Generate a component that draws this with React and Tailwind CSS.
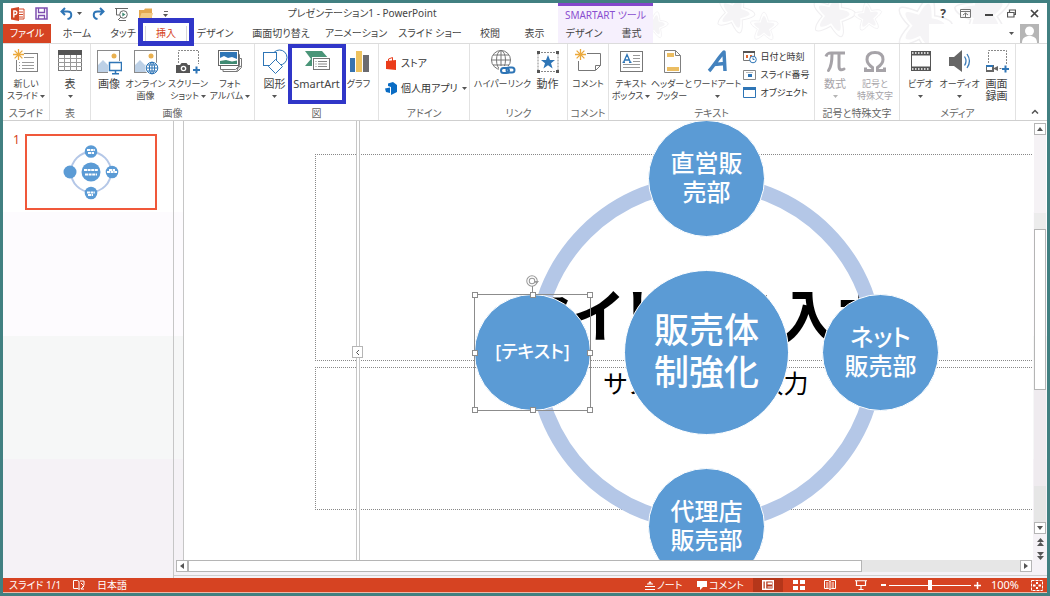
const Svg = ({ w = 26, h = 26, children, className = "" }) => (
  <svg width={w} height={h} viewBox={`0 0 ${w} ${h}`} fill="none" className={`shrink-0 ${className}`} aria-hidden="true">
    {children}
  </svg>
);

const Caret = ({ className = "text-[#555]" }) => (
  <svg width="5" height="3" viewBox="0 0 5 3" className={`shrink-0 ${className}`} aria-hidden="true">
    <path d="M0 0h5L2.5 3z" fill="currentColor" />
  </svg>
);

const Burst = () => (
  <path d="M5.5 0v11M0 5.5h11M1.6 1.6l7.8 7.8M9.4 1.6L1.6 9.4" stroke="#eba93c" strokeWidth="1.3" />
);

const Photo = () => (
  <>
    <rect x="1.5" y="1.500" width="22" height="22" fill="#fff" stroke="#8a8a8a" />
    <path d="M2 23v-7l5-5 5 5 3-2 3 3v6z" fill="#bcd0e6" />
    <circle cx="18" cy="7" r="2.500" fill="#e9b04f" />
  </>
);

const icons = {
  newSlide: (
    <Svg>
      <rect x="3.500" y="4.500" width="21" height="18" fill="#fff" stroke="#808080" />
      <path d="M11 8.500h10M9 13.500h12M9 16.500h12M9 19.500h12M6 13.500h1M6 16.500h1M6 19.500h1" stroke="#9a9a9a" />
      <rect x="0" y="0" width="11" height="11" fill="#fff" />
      <Burst />
    </Svg>
  ),
  table: (
    <Svg>
      <rect x="1.500" y="1.500" width="23" height="20" fill="#fff" stroke="#777" />
      <rect x="1" y="1" width="24" height="5" fill="#555" />
      <path d="M1 9.500h24M1 13.500h24M1 17.500h24M7.500 6v16M13.500 6v16M19.500 6v16" stroke="#999" />
    </Svg>
  ),
  picture: (
    <Svg>
      <Photo />
      <rect x="12" y="12" width="14" height="14" fill="#fff" />
      <rect x="13.500" y="13.500" width="12" height="8" fill="#fff" stroke="#2e75b6" strokeWidth="1.500" />
      <path d="M19.500 22v3M16 24.800h7" stroke="#2e75b6" strokeWidth="1.500" />
    </Svg>
  ),
  online: (
    <Svg>
      <Photo />
      <circle cx="19" cy="19" r="7" fill="#fff" />
      <g stroke="#2e75b6">
        <circle cx="19" cy="19" r="5.800" fill="#fff" />
        <ellipse cx="19" cy="19" rx="2.600" ry="5.800" />
        <path d="M13.200 19h11.600M14.200 16h9.600M14.200 22h9.600M19 13v12" />
      </g>
    </Svg>
  ),
  screenshot: (
    <Svg>
      <path d="M3.500 14V1.500h20V15" stroke="#888" strokeDasharray="2 1" />
      <path d="M1 16h4l1.500-2h5l1.500 2h2v8H1z" fill="#555" />
      <circle cx="8.500" cy="19.500" r="2.800" fill="#fff" />
      <circle cx="8.500" cy="19.500" r="1.500" fill="#555" />
      <path d="M21.500 17.500v7M18 21h7" stroke="#2e75b6" strokeWidth="2" />
    </Svg>
  ),
  album: (
    <Svg>
      <path d="M6 9.500h18.500v9l-4 4H6z" fill="#fff" stroke="#777" />
      <path d="M3.500 5.500h19v11l-4 4h-15z" fill="#fff" stroke="#777" />
      <rect x="1.500" y="1.500" width="20" height="15" fill="#fff" stroke="#666" />
      <rect x="3" y="3" width="17" height="7" fill="#2e75b6" />
      <path d="M3 9l4-2 4 2 4-1 5 2v2H3z" fill="#fff" />
      <path d="M3 12l6-1 6 1.500 5-1V15H3z" fill="#3f8a72" />
      <path d="M20 22l1-4 4-1" fill="#ddd" stroke="#777" />
    </Svg>
  ),
  shapes: (
    <Svg w={26}>
      <circle cx="17.500" cy="8.500" r="7.500" fill="#fff" stroke="#2e75b6" />
      <rect x="1.500" y="3.500" width="13" height="13" fill="#fff" stroke="#2e75b6" />
      <path d="M13.500 10.500l7 7-7 7-7-7z" fill="#fff" stroke="#2e75b6" />
    </Svg>
  ),
  smartart: (
    <Svg>
      <path d="M1 2h17l7 8-7 7H1l6-7z" fill="#4a9578" />
      <rect x="8" y="8" width="18" height="15" fill="#fff" />
      <rect x="9.500" y="9.500" width="16" height="11" fill="#fff" stroke="#777" />
      <path d="M14 12.500h9M14 15h9M14 17.500h9M11.500 12.500h1M11.500 15h1M11.500 17.500h1" stroke="#888" />
    </Svg>
  ),
  chart: (
    <Svg w={20}>
      <path d="M1 9h5v14H1z" fill="#3673b0" />
      <path d="M7 2h6v21H7z" fill="#edc25f" />
      <path d="M14 6h6v17h-6z" fill="#6b6b70" />
    </Svg>
  ),
  link: (
    <Svg>
      <g stroke="#777">
        <circle cx="11" cy="11" r="9.500" fill="#fff" />
        <ellipse cx="11" cy="11" rx="4.500" ry="9.500" />
        <path d="M1.500 11h19M3 6h16M3 16h16M11 1.500v19" />
      </g>
      <rect x="9" y="17" width="17" height="9" fill="#fff" />
      <g stroke="#2e75b6" strokeWidth="2">
        <rect x="11" y="19" width="8" height="5" rx="2.500" />
        <rect x="16.500" y="18.500" width="8" height="5" rx="2.500" />
      </g>
    </Svg>
  ),
  action: (
    <Svg>
      <rect x="3" y="3.500" width="20" height="19" stroke="#888" strokeDasharray="2 1" />
      <path d="M2 2h3v3H2zM21 2h3v3h-3zM2 21h3v3H2zM21 21h3v3h-3z" fill="#555" />
      <path d="M13 6l2 5h5l-4 3.300 1.600 5.200L13 16.300l-4.600 3.200L10 14.300 6 11h5z" fill="#2e75b6" />
    </Svg>
  ),
  comment: (
    <Svg>
      <path d="M12 4.500h13.500v12l-5 5H3.500V12" stroke="#777" />
      <path d="M20.500 21v-4.500h5" stroke="#777" />
      <Burst />
    </Svg>
  ),
  textbox: (
    <Svg>
      <rect x="2.500" y="2.500" width="22" height="20" fill="#fff" stroke="#777" />
      <path d="M15 6.500h7M15 9.500h7M15 12.500h7M5 15.500h17M5 18.500h17" stroke="#999" />
      <path d="M5.500 13.500L9 5.500l3.500 8M6.700 11h4.600M4.500 13.300h2.500M11 13.300h2.500" stroke="#2e75b6" strokeWidth="1.300" />
    </Svg>
  ),
  header: (
    <Svg>
      <path d="M5.500 1.500h11l5 5v17h-16z" fill="#fff" stroke="#808080" />
      <path d="M16.500 1.500v5h5" stroke="#808080" />
      <path d="M8 4h7v4H8zM8 18h12v4H8z" fill="#ebbd62" />
    </Svg>
  ),
  wordart: (
    <Svg>
      <path d="M4 22c4-4 10-14 15-19l1 19M9 15.500l11-1" stroke="#4382be" strokeWidth="3.500" strokeLinejoin="round" />
    </Svg>
  ),
  pi: (
    <Svg>
      <path d="M4 7.500c1-3 2-3.500 5-3.500h14" stroke="#a6a3a8" strokeWidth="3" />
      <path d="M10 5c0 8-1 13-3.500 16.500M17 5v12c0 4 2 4.500 5 3" stroke="#a6a3a8" strokeWidth="3" strokeLinecap="round" />
    </Svg>
  ),
  omega: (
    <Svg>
      <path d="M3.500 18.500v3h7v-3C7.500 16.500 5 13.500 5 10.500 5 5.500 8.500 3.500 13 3.500s8 2 8 7c0 3-2.500 6-5.500 8v3h7v-3" stroke="#a6a3a8" strokeWidth="3" />
    </Svg>
  ),
  video: (
    <Svg>
      <rect x="3" y="2" width="20" height="20" fill="#555" />
      <rect x="4" y="6.500" width="18" height="11" fill="#fff" />
      <path d="M4 4h18M4 20h18" stroke="#fff" strokeWidth="1.500" strokeDasharray="1.500 1.500" />
    </Svg>
  ),
  audio: (
    <Svg>
      <path d="M2 8h5l8-7v22l-8-6H2z" fill="#666" />
      <path d="M17.500 7.500c2 3 2 6 0 9M20 5c3.500 5 3.500 9 0 14" stroke="#3b7bb8" strokeWidth="1.300" />
    </Svg>
  ),
  record: (
    <Svg>
      <path d="M4.500 14V1.500h18V15" stroke="#888" strokeDasharray="2 1" />
      <path d="M2 16h8v7H2z" fill="#666" />
      <path d="M2 16h7v2H2z" fill="#2e75b6" />
      <path d="M3 18h5v3H3z" fill="#fff" />
      <path d="M10 19l4-2v5l-4-2z" fill="#666" />
      <path d="M15.500 19.500h2" stroke="#777" />
      <path d="M21.500 16.500v7M18 20h7" stroke="#2e75b6" strokeWidth="2" />
    </Svg>
  ),
};

function Big({ icon, lines, width, small, arrow, disabled, marked }) {
  return (
    <button
      type="button"
      disabled={disabled}
      className={`relative flex shrink-0 flex-col items-center pt-[5px] ${width} ${disabled ? "text-[#a6a3a8]" : "text-[#444]"}`}
    >
      {icons[icon]}
      {lines.map((l, i) => (
        <span
          key={l}
          className={`flex h-3 items-center gap-0.5 whitespace-nowrap ${i === 0 ? "mt-[3px]" : ""} ${small ? "text-[9px]" : "text-[11px]"}`}
        >
          {l}
          {arrow && i === 1 && <Caret />}
        </span>
      ))}
      {arrow && lines.length === 1 && (
        <span className="flex h-3 items-center">
          <Caret className={disabled ? "text-[#b5b5b5]" : "text-[#555]"} />
        </span>
      )}
      {marked && <span className="pointer-events-none absolute -inset-x-1 top-0 h-[60px] border-4 border-[#3036c8]" />}
    </button>
  );
}

function Row({ icon, children, arrow, big }) {
  return (
    <button type="button" className={`flex items-center gap-1 whitespace-nowrap text-[#333] ${big ? "text-[10px]" : "text-[9px]"}`}>
      {icon}
      {children}
      {arrow && <Caret />}
    </button>
  );
}

function Group({ label, width, children }) {
  return (
    <section aria-label={label} className={`flex shrink-0 flex-col border-r border-[#e2e2e2] ${width}`}>
      <div className="flex h-[63px] justify-center">{children}</div>
      <div className="flex h-3 items-center justify-center text-[10px] whitespace-nowrap text-[#666]">{label}</div>
    </section>
  );
}

const tabs = [
  ["ホーム", "w-[52px]"],
  ["タッチ", "w-10"],
  ["挿入", "w-[46px]"],
  ["デザイン", "w-[52px]"],
  ["画面切り替え", "w-20"],
  ["アニメーション", "w-[70px]"],
  ["スライド ショー", "w-[78px]"],
  ["校閲", "w-[42px]"],
  ["表示", "w-[47px]"],
];

const STAR = "M0-20Q3-20 6-8Q18-9 19-5Q19-2 9 4Q14 15 11 17Q8 18 0 10Q-9 18-12 16Q-14 13-9 3Q-19-3-18-7Q-17-9-6-8Q-3-20 0-20Z";
const stars = [
  [88, 22, 0.5, 10],
  [168, 10, 0.75, 20],
  [197, 24, 0.55, 0],
  [266, 12, 0.85, 12],
  [301, 14, 0.55, -8],
  [356, 22, 1.1, 15],
  [416, 10, 1.1, -10],
];

function Header() {
  return (
    <header className="relative shrink-0 bg-white">
      <svg className="absolute top-0 right-0" width="480" height="40" viewBox="0 0 480 40" aria-hidden="true">
        {stars.map(([x, y, s, r]) => (
          <g key={x} transform={`translate(${x} ${y}) rotate(${r}) scale(${s})`}>
            <path d={STAR} transform="scale(1.35)" fill="#fff" stroke="#f0eff1" />
            <path d={STAR} fill="#f5f4f6" />
          </g>
        ))}
      </svg>
      <div className="relative flex h-[21px]">
        <div className="flex w-[187px] shrink-0 items-center pl-2">
          <Svg w={14} h={14}>
            <path d="M6 2h7v10H6z" fill="#fff" stroke="#d24726" />
            <path d="M8 5h4M8 7.500h4M8 10h4" stroke="#d24726" />
            <path d="M0 1.500L8 0v14l-8-1.500z" fill="#d24726" />
            <path d="M2.800 10.500V4H4c2.500 0 2.500 3.500 0 3.500H3" stroke="#fff" strokeWidth="1.300" />
          </Svg>
          <button type="button" aria-label="上書き保存" className="ml-2.5">
            <Svg w={13} h={13}>
              <path d="M1 1h11v11H1z" stroke="#7e4fb0" strokeWidth="1.500" />
              <path d="M3.500 1v4.500h6V1M3.500 12V8.500h6V12" stroke="#7e4fb0" strokeWidth="1.300" />
            </Svg>
          </button>
          <button type="button" aria-label="元に戻す" className="ml-3 flex items-center gap-1">
            <Svg w={13} h={13}>
              <path d="M5 1L1.500 4.500 5 8M2 4.500h5.500c5 0 5 6.500 0 7.500" stroke="#2e75b6" strokeWidth="2" />
            </Svg>
            <Caret />
          </button>
          <button type="button" aria-label="やり直し" className="ml-2.5">
            <Svg w={13} h={13}>
              <path d="M8 1l3.500 3.500L8 8M11 4.500H5.500c-5 0-5 6.500 0 7.500" stroke="#2e75b6" strokeWidth="2" />
            </Svg>
          </button>
          <button type="button" aria-label="スライドショー" className="ml-2.5">
            <Svg w={14} h={14}>
              <path d="M0 1.500h13M1.500 2v6h4M3 13l3-3" stroke="#666" />
              <circle cx="8.500" cy="7.500" r="3.800" fill="#fff" stroke="#666" />
              <path d="M7.300 5.500l3.200 2-3.200 2z" fill="#3f8a72" />
              <path d="M4 13.500h7" stroke="#666" />
            </Svg>
          </button>
          <button type="button" aria-label="開く" className="ml-2.5">
            <Svg w={14} h={12}>
              <path d="M0 2h5l1-1.500h7V11H0z" fill="#e3a850" />
              <path d="M2.500 5H14l-2 7H0z" fill="#f3cb84" />
            </Svg>
          </button>
          <button type="button" aria-label="カスタマイズ" className="ml-2.5 flex flex-col items-center gap-0.5">
            <span className="h-px w-1 bg-[#666]" />
            <Caret />
          </button>
        </div>
        <h1 className="flex max-w-[368px] flex-1 items-center justify-center pr-6 text-[10px] whitespace-nowrap text-[#444]">
          プレゼンテーション1 - PowerPoint
        </h1>
        <div className="flex w-[95px] shrink-0 items-center justify-center border-t-3 border-[#8347cb] bg-[#f6f0fd] text-[10px] whitespace-nowrap text-[#8a4fd0]">
          SMARTART ツール
        </div>
        <div className="flex flex-1 items-center justify-end gap-3.5 pr-2 text-[#444]">
          <button type="button" aria-label="ヘルプ" className="text-[12px] font-bold">?</button>
          <button type="button" aria-label="リボンの表示オプション">
            <Svg w={11} h={9}><path d="M.5.500h10v8H.5zM.5 2.500h10M3 6l2.500-2L8 6M5.500 4v4" stroke="#777" /></Svg>
          </button>
          <button type="button" aria-label="最小化">
            <Svg w={8} h={9}><path d="M0 6h8" stroke="#444" strokeWidth="2" /></Svg>
          </button>
          <button type="button" aria-label="元のサイズに戻す">
            <Svg w={9} h={9}><path d="M2.500 3V1h6v4.500H7M.5 3.500H7V8H.5z" stroke="#555" strokeWidth="1.200" /></Svg>
          </button>
          <button type="button" aria-label="閉じる">
            <Svg w={9} h={9}><path d="M1 1l7 7M8 1L1 8" stroke="#444" strokeWidth="1.700" /></Svg>
          </button>
        </div>
      </div>
      <nav className="relative flex h-5 border-b border-[#dcdcdc] text-[10px] text-[#444]">
        <button type="button" className="w-12 shrink-0 bg-[#d64322] whitespace-nowrap text-white">ファイル</button>
        {tabs.map(([t, w]) =>
          t === "挿入" ? (
            <button key={t} type="button" className={`relative flex shrink-0 items-center justify-center ${w} text-[#d64322]`}>
              <span className="border-x border-[#d8d8d8] px-2.5">{t}</span>
              <span className="pointer-events-none absolute -inset-x-[5px] -top-1.5 h-7 border-5 border-[#3036c8]" />
            </button>
          ) : (
            <button key={t} type="button" className={`flex shrink-0 items-center justify-center whitespace-nowrap ${w}`}>{t}</button>
          ),
        )}
        <div className="flex w-[95px] shrink-0 bg-[#f6f0fd]">
          <button type="button" className="w-[52px]">デザイン</button>
          <button type="button" className="flex-1">書式</button>
        </div>
        <div className="flex flex-1 items-end justify-end">
          <button type="button" aria-label="アカウント" className="flex items-center gap-1.5 bg-white pr-2 pl-20">
            <Caret />
            <Svg w={19} h={19}>
              <path d="M0 0h19v19H0z" fill="#b5b5b5" />
              <circle cx="9.500" cy="7" r="4.500" fill="#fff" />
              <path d="M2 19c0-5 3-7 7.500-7s7.500 2 7.500 7z" fill="#fff" />
            </Svg>
          </button>
        </div>
      </nav>
    </header>
  );
}

function Ribbon() {
  return (
    <div className="flex h-[77px] shrink-0 border-b border-[#cfcfcf] bg-white">
      <Group label="スライド" width="w-[47px]">
        <Big icon="newSlide" lines={["新しい", "スライド"]} width="w-11" small arrow />
      </Group>
      <Group label="表" width="w-[41px]">
        <Big icon="table" lines={["表"]} width="w-9" arrow />
      </Group>
      <Group label="画像" width="w-[164px]">
        <Big icon="picture" lines={["画像"]} width="w-[30px]" />
        <Big icon="online" lines={["オンライン", "画像"]} width="w-[43px]" small />
        <Big icon="screenshot" lines={["スクリーン", "ショット"]} width="w-[42px]" small arrow />
        <Big icon="album" lines={["フォト", "アルバム"]} width="w-[42px]" small arrow />
      </Group>
      <Group label="図" width="w-[124px]">
        <Big icon="shapes" lines={["図形"]} width="w-[34px]" arrow />
        <Big icon="smartart" lines={["SmartArt"]} width="w-[50px]" marked />
        <Big icon="chart" lines={["グラフ"]} width="w-[34px]" small />
      </Group>
      <Group label="アドイン" width="w-[91px]">
        <div className="flex flex-1 flex-col gap-2.5 pt-3 pl-1.5">
          <Row big icon={
            <Svg w={12} h={13}>
              <path d="M1 4l10-1v10L1 12z" fill="#eb3c1a" />
              <path d="M3.500 4V2l4-1.500V4" stroke="#eb3c1a" />
            </Svg>
          }>ストア</Row>
          <Row big arrow icon={
            <Svg w={12} h={13}>
              <path d="M0 6.500l5-1v5.500l-4-1z" fill="#0a6cc4" />
              <path d="M3 1.500L8 0l4 3v7l-6 3V5L3 4z" fill="#0a6cc4" />
            </Svg>
          }>個人用アプリ</Row>
        </div>
      </Group>
      <Group label="リンク" width="w-[98px]">
        <Big icon="link" lines={["ハイパーリンク"]} width="w-[58px]" small />
        <Big icon="action" lines={["動作"]} width="w-8" />
      </Group>
      <Group label="コメント" width="w-[41px]">
        <Big icon="comment" lines={["コメント"]} width="w-10" small />
      </Group>
      <Group label="テキスト" width="w-[206px]">
        <Big icon="textbox" lines={["テキスト", "ボックス"]} width="w-[39px]" small arrow />
        <Big icon="header" lines={["ヘッダーと", "フッター"]} width="w-[42px]" small />
        <Big icon="wordart" lines={["ワードアート"]} width="w-[50px]" small arrow />
        <div className="flex w-[69px] flex-col gap-1 pt-1.5">
          <Row icon={
            <Svg w={14} h={14}>
              <path d="M.5 1.500h11v9H.5z" fill="#fff" stroke="#777" />
              <path d="M0 2h12" stroke="#555" strokeWidth="2" />
              <path d="M3 5h2v3H3zM7 5h2v2H7z" fill="#e0662e" />
              <circle cx="10" cy="9.500" r="3.300" fill="#fff" stroke="#2e75b6" />
              <path d="M10 7.500v2h1.500" stroke="#2e75b6" />
            </Svg>
          }>日付と時刻</Row>
          <Row icon={
            <Svg w={14} h={14}>
              <path d="M.5 2.500h12v9H.5z" fill="#fff" stroke="#888" />
              <path d="M5 6h4v3H5z" fill="#2e75b6" />
              <path d="M3 4.500h7" stroke="#bbb" />
            </Svg>
          }>スライド番号</Row>
          <Row icon={
            <Svg w={14} h={14}>
              <path d="M.5 1.500h12v10H.5z" fill="#fff" stroke="#2e75b6" />
              <path d="M0 1h13v3H0z" fill="#2e75b6" />
            </Svg>
          }>オブジェクト</Row>
        </div>
      </Group>
      <Group label="記号と特殊文字" width="w-[85px]">
        <Big icon="pi" lines={["数式"]} width="w-9" arrow disabled />
        <Big icon="omega" lines={["記号と", "特殊文字"]} width="w-11" small disabled />
      </Group>
      <Group label="メディア" width="w-[116px]">
        <Big icon="video" lines={["ビデオ"]} width="w-9" small arrow />
        <Big icon="audio" lines={["オーディオ"]} width="w-[42px]" small arrow />
        <Big icon="record" lines={["画面", "録画"]} width="w-8" />
      </Group>
      <button type="button" aria-label="リボンを折りたたむ" className="ml-auto flex items-end pr-2 pb-1.5">
        <Svg w={8} h={5}><path d="M1 4.500l3-3 3 3" stroke="#555" strokeWidth="1.500" /></Svg>
      </button>
    </div>
  );
}

function Thumbnails() {
  return (
    <aside className="flex w-[171px] shrink-0 items-start border-r border-[#c6c6c6] pt-[13px] pl-2.5">
      <span className="w-3 text-[12px] leading-3 text-[#d64322]">1</span>
      <button type="button" aria-label="スライド 1" className="border-2 border-[#f0583a] bg-white">
        <svg width="128" height="72" viewBox="0 0 128 72" aria-hidden="true">
          <circle cx="64" cy="36" r="20" fill="none" stroke="#b4c7e7" strokeWidth="2" />
          <g fill="#5b9bd5">
            <circle cx="64" cy="36" r="9.500" />
            <circle cx="64" cy="15.500" r="6.300" />
            <circle cx="64" cy="57" r="6.300" />
            <circle cx="43" cy="36" r="6.500" />
            <circle cx="85" cy="36" r="6.300" />
          </g>
          <path d="M57 34h14M58 38.500h12M60 14h8M61 17h6M60 56.500h8M61 59h5M80 36h10M82 34h6" stroke="#fff" strokeWidth="2" strokeDasharray="3 .6" />
        </svg>
      </button>
    </aside>
  );
}

const nodes = [
  { id: "top", lines: ["直営販", "売部"], box: "left-[464px] -top-px size-[117px]", text: "text-[24px] leading-[29px]" },
  { id: "bottom", lines: ["代理店", "販売部"], box: "left-[464px] top-[347px] size-[117px]", text: "text-[24px] leading-[29px]" },
  { id: "right", lines: ["ネット", "販売部"], box: "left-[638px] top-[173px] size-[117px]", text: "text-[24px] leading-[29px]" },
  { id: "center", lines: ["販売体", "制強化"], box: "left-[440px] top-[149px] size-[165px]", text: "text-[35px] leading-[42px]" },
  { id: "left", lines: ["[テキスト]"], box: "left-[290px] top-[173px] size-[117px]", text: "text-[18px] leading-6" },
];

const handles = [
  "-left-[3px] -top-[3px]",
  "left-[55px] -top-[3px]",
  "-right-[3px] -top-[3px]",
  "-left-[3px] top-[55px]",
  "-right-[3px] top-[55px]",
  "-left-[3px] -bottom-[3px]",
  "left-[55px] -bottom-[3px]",
  "-right-[3px] -bottom-[3px]",
];

function Canvas() {
  return (
    <main className="relative flex-1 overflow-hidden border-l border-[#c6c6c6] bg-white">
      <div className="absolute top-[33px] left-[131px] h-[207px] w-full border border-dotted border-[#888]" />
      <div className="absolute top-[246px] left-[131px] h-[143px] w-full border border-dotted border-[#888]" />
      <div className="absolute top-0 left-[172px] h-full w-1 border-x border-[#c6c6c6] bg-white" />
      <p className="absolute top-[161px] left-[322px] w-[400px] text-center text-[57px] leading-[66px] font-bold whitespace-nowrap text-black">タイトルを入力</p>
      <p className="absolute top-[245px] left-[372px] w-[300px] text-center text-[25px] leading-[34px] whitespace-nowrap text-black">サブタイトルを入力</p>
      <svg className="absolute top-[46px] left-[336px]" width="372" height="372" viewBox="0 0 372 372" aria-hidden="true">
        <circle cx="186" cy="186" r="170.500" fill="none" stroke="#b4c7e7" strokeWidth="15" />
      </svg>
      {nodes.map((n) => (
        <div key={n.id} className={`absolute flex flex-col items-center justify-center rounded-full border border-white bg-[#5b9bd5] pb-1 font-medium whitespace-nowrap text-white ${n.box} ${n.text}`}>
          {n.lines.map((l) => <span key={l}>{l}</span>)}
        </div>
      ))}
      <div className="absolute top-[173px] left-[290px] size-[117px] border border-[#8c8c8c]">
        {handles.map((h) => <span key={h} className={`absolute size-[6px] border border-[#8c8c8c] bg-white ${h}`} />)}
        <Svg w={13} h={18} className="absolute -top-5 left-[51px]">
          <path d="M6.500 11v7" stroke="#8c8c8c" />
          <circle cx="6" cy="6" r="4" stroke="#999" strokeWidth="3.500" />
          <circle cx="6" cy="6" r="4" stroke="#fff" strokeWidth="1.500" />
          <path d="M8 6h5l-2.500 3z" fill="#999" />
        </Svg>
      </div>
      <button type="button" aria-label="テキスト ウィンドウ" className="absolute top-[225px] left-[168px] flex h-3 w-[11px] items-center justify-center border border-[#b5b5b5] bg-white">
        <Svg w={5} h={7}><path d="M4 1L1.500 3.500 4 6" stroke="#555" /></Svg>
      </button>
    </main>
  );
}

const ArrowBtn = ({ label, d }) => (
  <button type="button" aria-label={label} className="flex size-3 shrink-0 items-center justify-center border border-[#b5b5b5] bg-white">
    <Svg w={6} h={6}><path d={d} fill="#555" /></Svg>
  </button>
);

function Workspace() {
  return (
    <div className="flex min-h-0 flex-1 bg-[linear-gradient(to_bottom,#fff_20%,#fdfbfe_20%,#fdfbfe_47%,#f6f7f7_47%,#f6f7f7_74%,#f5f2f6_74%)]">
      <Thumbnails />
      <div className="mb-0.5 flex min-w-0 flex-1 flex-col border-b border-[#cfcfcf]">
        <div className="flex min-h-0 flex-1">
          <div className="ml-[9px] flex min-w-0 flex-1"><Canvas /></div>
          <div className="flex w-[14px] flex-col items-center pt-0.5">
            <ArrowBtn label="上へ" d="M0 5h6L3 1z" />
            <div className="flex w-3 flex-1 flex-col bg-[#e6e6e6]">
              <div className="h-[78px] bg-[#f5f2f5]" />
              <div className="h-4 bg-[#ececec]" />
              <div className="h-[161px] border border-[#b5b5b5] bg-white" />
              <div className="h-24 bg-[#efebef]" />
            </div>
            <ArrowBtn label="下へ" d="M0 1h6L3 5z" />
            <button type="button" aria-label="前のスライド" className="mt-1"><Svg w={7} h={8}><path d="M0 4h7L3.500 0zM0 8h7L3.500 4z" fill="#555" /></Svg></button>
            <button type="button" aria-label="次のスライド" className="mt-1.5"><Svg w={7} h={8}><path d="M0 0h7L3.500 4zM0 4h7L3.500 8z" fill="#555" /></Svg></button>
          </div>
        </div>
        <div className="mr-[15px] mb-0.5 ml-0.5 flex h-[13px] pb-px">
          <ArrowBtn label="左へ" d="M5 0v6L1 3z" />
          <div className="flex flex-1 bg-[#e6e6e6]">
            <div className="w-[81%] border border-[#b5b5b5] bg-white" />
          </div>
          <ArrowBtn label="右へ" d="M1 0v6l4-3z" />
        </div>
      </div>
    </div>
  );
}

function StatusBar() {
  return (
    <footer className="flex h-[15px] shrink-0 items-center border-b border-[#f0b8a8] bg-[#d64322] pl-1.5 text-[10px] text-white">
      <span className="w-16">スライド 1/1</span>
      <button type="button" aria-label="スペル チェック" className="w-6">
        <Svg w={12} h={10}>
          <path d="M6 9.500V1.500L4.500.500H.5v8H5l1 1 1-1M7 1h4v4L9 8M8 3l2 2M11 6l-3 3h3" stroke="#fff" />
        </Svg>
      </button>
      <button type="button">日本語</button>
      <div className="ml-auto flex h-full items-center">
        <button type="button" className="flex w-[52px] items-center gap-0.5">
          <Svg w={10} h={9}><path d="M0 5.500h10M0 8.500h10M2 3h6" stroke="#fff" /><path d="M3 2.500h4L5 0z" fill="#fff" /></Svg>ノート
        </button>
        <button type="button" className="flex w-14 items-center gap-0.5 whitespace-nowrap">
          <Svg w={10} h={9}><path d="M0 0h10v6H6L3 9V6H0z" fill="#fff" /></Svg>コメント
        </button>
        <button type="button" aria-label="標準" className="flex h-full w-[30px] items-center justify-center bg-[#b5361a]">
          <Svg w={12} h={10}><path d="M.75.750h10.500v8.500H.75zM3.500 1v8" stroke="#fff" strokeWidth="1.500" /><path d="M5.500 2.500H10v2H5.500zM5.500 6.500H10v1H5.500z" fill="#fff" /></Svg>
        </button>
        <button type="button" aria-label="スライド一覧" className="flex w-8 justify-center">
          <Svg w={12} h={10}><path d="M0 0h5v4H0zM7 0h5v4H7zM0 6h5v4H0zM7 6h5v4H7z" fill="#fff" /></Svg>
        </button>
        <button type="button" aria-label="閲覧表示" className="flex w-[30px] justify-center">
          <Svg w={12} h={10}><path d="M6 1.500v8L4.500 8.500h-4V.500h4l1.500 1 1.500-1h4v8h-4L6 9.500M2 3h2.500M2 5h2.500M2 7h2.500M7.500 3H10M7.500 5H10M7.500 7H10" stroke="#fff" /></Svg>
        </button>
        <button type="button" aria-label="スライド ショー" className="flex w-8 justify-center">
          <Svg w={12} h={10}><path d="M0 .750h12M1.500 1v4.500h9V1M6 5.500V9M3.500 9.500h5" stroke="#fff" strokeWidth="1.200" /></Svg>
        </button>
        <button type="button" aria-label="縮小" className="flex w-3 justify-center"><span className="h-0.5 w-[5px] bg-white" /></button>
        <input
          type="range"
          aria-label="ズーム"
          defaultValue="50"
          className="h-2.5 w-[82px] appearance-none bg-[linear-gradient(#fff,#fff)] bg-[length:100%_1px] bg-center bg-no-repeat [&::-webkit-slider-thumb]:h-2.5 [&::-webkit-slider-thumb]:w-1 [&::-webkit-slider-thumb]:appearance-none [&::-webkit-slider-thumb]:bg-white"
        />
        <button type="button" aria-label="拡大" className="flex w-3 justify-center"><Svg w={7} h={7}><path d="M3.500 0v7M0 3.500h7" stroke="#fff" strokeWidth="1.500" /></Svg></button>
        <button type="button" className="w-11 text-center text-[11px]">100%</button>
        <button type="button" aria-label="ウィンドウに合わせる" className="mr-1 ml-1">
          <Svg w={12} h={11}><path d="M.5.500h11v10H.5z" stroke="#fff" strokeDasharray="3 1" /><path d="M6 2v2M6 7v2M2 5.500h2.500M7.500 5.500H10" stroke="#fff" strokeWidth="2" /></Svg>
        </button>
      </div>
    </footer>
  );
}

export default function App() {
  return (
    <div className="flex h-screen flex-col overflow-hidden border-3 border-[#418081] bg-white font-['Noto_Sans','Noto_Sans_CJK_JP',sans-serif] [font-feature-settings:'palt']">
      <Header />
      <Ribbon />
      <Workspace />
      <StatusBar />
    </div>
  );
}
